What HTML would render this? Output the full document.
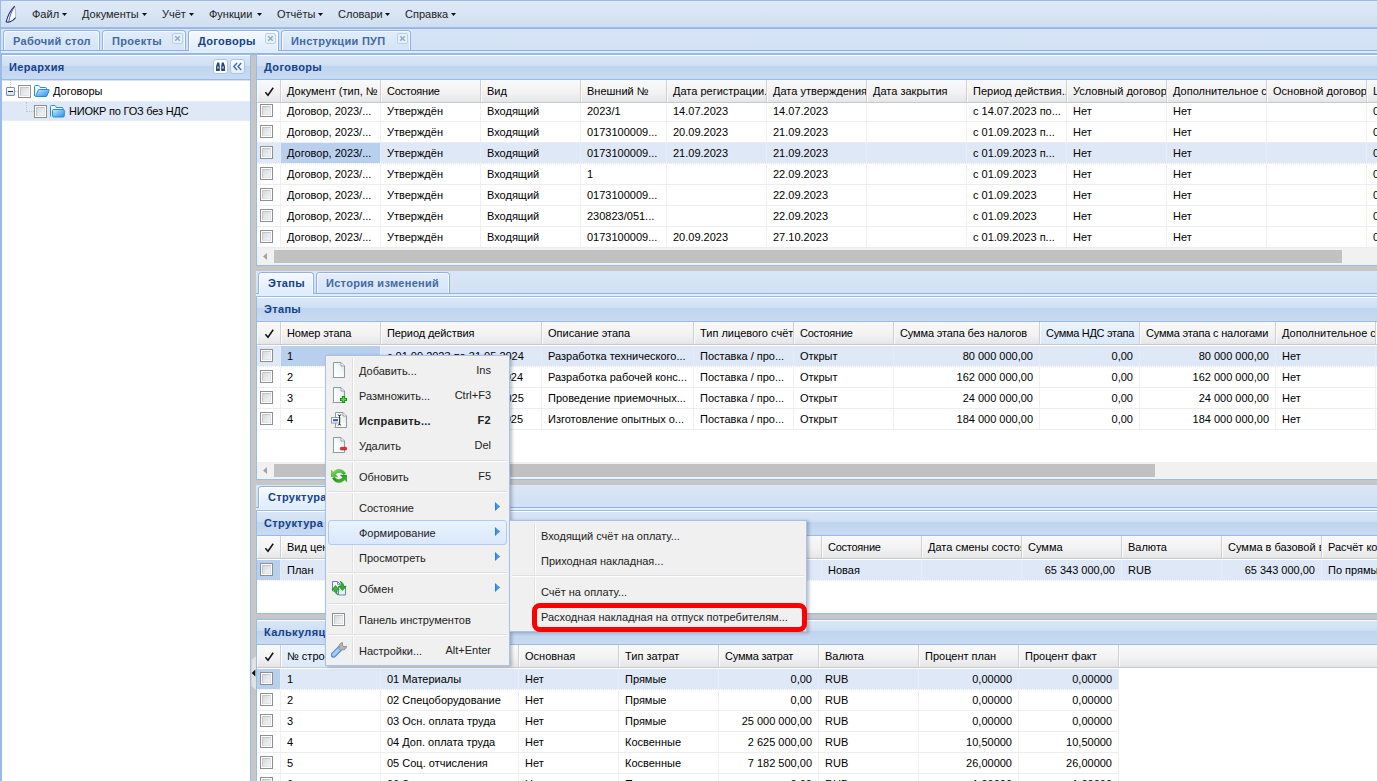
<!DOCTYPE html><html><head><meta charset="utf-8"><title>UI</title><style>
*{box-sizing:border-box;margin:0;padding:0}
html,body{width:1377px;height:781px;overflow:hidden;background:#fff}
body{position:relative;font:11px/13px "Liberation Sans",sans-serif;color:#000}
.a{position:absolute}
.t{position:absolute;white-space:nowrap;line-height:13px;height:13px}
.b{font-weight:bold;letter-spacing:.3px}
.ph{position:absolute;background:linear-gradient(#fff 0,#fff 1px,#d9e6f6 1px,#cfdff3 11px,#bfd4ee 11px,#c9dbf2 100%);border:1px solid #99bbe8;height:26px}
.ph .t{color:#15428b;font-weight:bold;letter-spacing:.35px;left:7px;top:6px}
.gh{position:absolute;height:23px;background:linear-gradient(#f9f9f9 0,#f3f3f4 12px,#e6e7e9 21px,#e2e3e5 22px,#c9c9c9 22px,#c9c9c9 23px);overflow:hidden}
.gh .c{position:absolute;top:0;height:22px;border-right:1px solid #d0d0d0;border-left:1px solid #fbfbfb;overflow:hidden}
.gh .c.ov{background:linear-gradient(#ebf3fd 0,#e3eefc 12px,#d9e8fb 22px)}
.gh .c span{position:absolute;left:5px;top:5px;white-space:nowrap;line-height:13px}
.row{position:absolute;height:21px;background:#fff;border-bottom:1px solid #ededed;overflow:hidden}
.row.sel{background:#dfe8f6;border-bottom:1px dotted #fff}
.row .c{position:absolute;top:0;height:20px;border-right:1px solid #f0f0f0;overflow:hidden}
.row.sel .c{border-right-color:#e6edf8}
.row .c.cs{background:#b8cfee}
.row .c span{position:absolute;left:6px;top:4px;white-space:nowrap;line-height:13px}
.row .c.r span{left:auto;right:6px}
.cb{position:absolute;width:13px;height:13px;border:1px solid #8e8f8f;background:#fff}
.cb i{position:absolute;left:1px;top:1px;width:9px;height:9px;border:1px solid #c3c6cb;border-right-color:#e1e3e6;border-bottom-color:#e1e3e6;background:linear-gradient(135deg,#d6d9df,#f4f4f5)}
.split{position:absolute;background:#c6c6c6}
.tab{position:absolute;height:20px;border:1px solid #8db2e3;border-bottom:none;border-radius:4px 4px 0 0;background:linear-gradient(#e3edf9 0,#d4e3f6 100%);color:#416aa3;font-weight:bold;letter-spacing:.3px}
.tab.act{background:linear-gradient(#f6f9fe 0,#deecfd 100%);color:#15428b;height:21px}
.tab .t{top:4px}
.tab:before{content:"";position:absolute;left:0;right:0;top:0;bottom:0;border:1px solid rgba(255,255,255,.75);border-bottom:none;border-radius:3px 3px 0 0}
.cl{position:absolute;width:11px;height:11px;border:1px solid #b5cdec;border-radius:2px;background:#e9f1fb;opacity:.9}
.sb{position:absolute;height:17px;background:#f1f1f1}
.sb .th{position:absolute;top:2px;height:13px;background:#c1c1c1}
.sb .ar{position:absolute;left:5px;top:4px;width:0;height:0;border:4.5px solid transparent;border-right:5px solid #a3a3a3;border-left:none}
.menu{position:absolute;background:#f0f0f0;border:1px solid #a5c3ea;box-shadow:2px 1px 3px rgba(50,55,75,.32)}
.menu .vl{position:absolute;top:2px;bottom:2px;width:2px;border-left:1px solid #e0e0e0;border-right:1px solid #fff}
.menu .sep{position:absolute;height:2px;border-top:1px solid #e0e0e0;border-bottom:1px solid #fff}
.menu .t{color:#222}
.arw{position:absolute;width:0;height:0;border:4.5px solid transparent;border-left:5px solid #3f7fdc;border-right:none}
.mb .t{color:#222;top:7px}
.dn{position:absolute;width:0;height:0;border:2.5px solid transparent;border-top:3px solid #111;border-bottom:none;top:13px}
</style></head><body>
<div class="a" style="left:0;top:0;width:1377px;height:781px;background:#dfe8f6"></div>
<div class="a mb" style="left:0;top:0;width:1377px;height:28px;border-top:1px solid #99bbe8;border-left:1px solid #99bbe8;background:linear-gradient(#e0eaf6 0,#d8e5f4 50%,#d0deef 100%);border-bottom:1px solid #9cbde9">
<svg class="a" style="left:4px;top:4px" width="13" height="19" viewBox="0 0 13 19"><path d="M9.600 1.200C5.500 5.500 2.600 11 1.200 16.800C3.500 17.700 7.500 16.500 10.600 12.600C10.800 9 10.600 4.500 9.600 1.200Z" fill="#fdfdfe"/><path d="M9.600 1.200C10.600 4.500 10.800 9 10.600 12.600" fill="none" stroke="#a9afc2" stroke-width=".9"/><path d="M9.600 1.200C5.500 5.500 2.600 11 1.200 16.800C3.500 17.700 7.500 16.500 10.600 12.600" fill="none" stroke="#1c2c80" stroke-width="1.100"/><path d="M9.600 1.200C6.600 6 4.600 11 3.800 16.600" fill="none" stroke="#3a4c95" stroke-width=".9"/></svg>
<span class="t" style="left:31px">Файл</span>
<svg class="a" style="left:61px;top:12px" width="5" height="3" viewBox="0 0 5 3"><path d="M0 0h5L2.500 3Z" fill="#111"/></svg>
<span class="t" style="left:81px">Документы</span>
<svg class="a" style="left:141px;top:12px" width="5" height="3" viewBox="0 0 5 3"><path d="M0 0h5L2.500 3Z" fill="#111"/></svg>
<span class="t" style="left:161px">Учёт</span>
<svg class="a" style="left:188px;top:12px" width="5" height="3" viewBox="0 0 5 3"><path d="M0 0h5L2.500 3Z" fill="#111"/></svg>
<span class="t" style="left:208px">Функции</span>
<svg class="a" style="left:256px;top:12px" width="5" height="3" viewBox="0 0 5 3"><path d="M0 0h5L2.500 3Z" fill="#111"/></svg>
<span class="t" style="left:276px">Отчёты</span>
<svg class="a" style="left:317px;top:12px" width="5" height="3" viewBox="0 0 5 3"><path d="M0 0h5L2.500 3Z" fill="#111"/></svg>
<span class="t" style="left:337px">Словари</span>
<svg class="a" style="left:384px;top:12px" width="5" height="3" viewBox="0 0 5 3"><path d="M0 0h5L2.500 3Z" fill="#111"/></svg>
<span class="t" style="left:404px">Справка</span>
<svg class="a" style="left:450px;top:12px" width="5" height="3" viewBox="0 0 5 3"><path d="M0 0h5L2.500 3Z" fill="#111"/></svg>
</div>
<div class="a" style="left:0;top:28px;width:1377px;height:25px;border-left:1px solid #99bbe8;background:linear-gradient(#d7e4f6,#d3e1f5)"></div>
<div class="a" style="left:0;top:28px;width:1377px;height:1px;background:#92b6e6"></div>
<div class="a" style="left:0;top:50px;width:1377px;height:1px;background:#8db2e3"></div>
<div class="a" style="left:0;top:51px;width:1377px;height:2px;background:#deecfd;border-left:1px solid #99bbe8"></div>
<div class="a" style="left:0;top:53px;width:1377px;height:2px;background:#93b7e6"></div>
<div class="tab" style="left:3px;top:30px;width:97px"><span class="t" style="left:9px">Рабочий стол</span>
</div>
<div class="tab" style="left:102px;top:30px;width:84px"><span class="t" style="left:9px">Проекты</span>
<span class="cl" style="right:2px;top:2px"><svg width="9" height="9" viewBox="0 0 9 9" style="position:absolute;left:0;top:0"><path d="M2.2 2.2l4.6 4.6M6.8 2.2L2.2 6.8" stroke="#8aa6cf" stroke-width="1.6"/></svg></span>
</div>
<div class="tab act" style="left:188px;top:30px;width:91px"><span class="t" style="left:9px">Договоры</span>
<span class="cl" style="right:2px;top:2px"><svg width="9" height="9" viewBox="0 0 9 9" style="position:absolute;left:0;top:0"><path d="M2.2 2.2l4.6 4.6M6.8 2.2L2.2 6.8" stroke="#8aa6cf" stroke-width="1.6"/></svg></span>
</div>
<div class="tab" style="left:281px;top:30px;width:130px"><span class="t" style="left:9px">Инструкции ПУП</span>
<span class="cl" style="right:2px;top:2px"><svg width="9" height="9" viewBox="0 0 9 9" style="position:absolute;left:0;top:0"><path d="M2.2 2.2l4.6 4.6M6.8 2.2L2.2 6.8" stroke="#8aa6cf" stroke-width="1.6"/></svg></span>
</div>
<div class="a" style="left:0;top:54px;width:1px;height:727px;background:#99bbe8"></div>
<div class="a" style="left:1px;top:55px;width:250px;height:726px;background:#fff;border-left:1px solid #99bbe8;border-right:1px solid #99bbe8"></div>
<div class="ph" style="left:1px;top:54px;width:250px"><span class="t" style="left:7px">Иерархия</span>
<span class="a" style="left:211px;top:4px;width:15px;height:15px;border:1px solid #a9c5ee;border-radius:3px;background:#fff"><svg width="13" height="13" viewBox="0 0 13 13" style="position:absolute;left:0;top:0"><path d="M2 11V6.5L3.3 2.5H5.2L5.8 6V11Z M7.2 11V6L7.8 2.5H9.7L11 6.5V11Z" fill="#27457f"/><path d="M3 7.5h2M8 7.5h2" stroke="#9fb6dc" stroke-width="2"/></svg></span>
<span class="a" style="left:228px;top:4px;width:15px;height:15px;border:1px solid #a9c5ee;border-radius:3px;background:linear-gradient(#fff,#e3eefb)"><svg width="13" height="13" viewBox="0 0 13 13" style="position:absolute;left:0;top:0"><path d="M6 3L2.8 6.5 6 10M10.2 3L7 6.5l3.2 3.5" fill="none" stroke="#3d6cb3" stroke-width="1.4"/></svg></span>
</div>
<div class="a" style="left:1px;top:80px;width:249px;height:1px;background:#c9c9c9;opacity:.6"></div>
<div class="a" style="left:2px;top:101px;width:248px;height:20px;background:#dfe8f6;border-top:1px dotted #eef2fa;border-bottom:1px dotted #eef2fa"></div>
<div class="a" style="left:10px;top:80px;width:1px;height:7px;border-left:1px dotted #c4c4c4"></div>
<div class="a" style="left:15px;top:91px;width:3px;height:1px;border-top:1px dotted #c4c4c4"></div>
<div class="a" style="left:26px;top:102px;width:1px;height:10px;border-left:1px dotted #c4c4c4"></div>
<div class="a" style="left:26px;top:111px;width:8px;height:1px;border-top:1px dotted #c4c4c4"></div>
<div class="a" style="left:6px;top:87px;width:9px;height:9px;border:1px solid #7f8fa8;border-radius:1px;background:linear-gradient(#fff,#d5dde8)"><i class="a" style="left:1px;top:3px;width:5px;height:1px;background:#1c2f57"></i></div>
<span class="cb" style="left:18px;top:85px"><i></i></span>
<span class="cb" style="left:34px;top:105px"><i></i></span>
<svg class="a" style="left:33px;top:83px" width="18" height="16" viewBox="0 0 18 16"><defs><linearGradient id="fo" x1="0" y1="0" x2="1" y2="1"><stop offset="0" stop-color="#d4eafb"/><stop offset=".45" stop-color="#7fc0f3"/><stop offset="1" stop-color="#2f8de6"/></linearGradient></defs><path d="M1.500 13V3.500q0-1 1-1h3q.8 0 1.200.7l.7 1.300h5.100q1 0 1 1v1.500" fill="#eef7fe" stroke="#1f8fd8"/><path d="M2.500 13.500L5.300 7.200q.3-.7 1-.7h9.200q1 0 .7 1l-2.200 5.300q-.3.700-1 .7Z" fill="url(#fo)" stroke="#1f8fd8"/></svg>
<svg class="a" style="left:49px;top:103px" width="17" height="16" viewBox="0 0 17 16"><path d="M1.500 13.500V3.500q0-1 1-1h3q.8 0 1.200.7l.7 1.300h5.600q1 0 1 1v1" fill="#f0f8fe" stroke="#1f8fd8"/><rect x="3.500" y="6.500" width="11.800" height="7.500" rx="1.200" fill="url(#fo)" stroke="#1f8fd8"/></svg>
<span class="t" style="left:53px;top:85px">Договоры</span>
<span class="t" style="left:69px;top:105px;letter-spacing:-.2px">НИОКР по ГОЗ без НДС</span>
<div class="split" style="left:251px;top:55px;width:5px;height:726px"></div>
<svg class="a" style="left:251px;top:656px" width="5" height="34" viewBox="0 0 5 34"><path d="M5 0L0.500 4V30L5 34Z" fill="#e2e2e2"/><path d="M4.300 13.500v7L0.700 17Z" fill="#111"/></svg>
<div class="a" style="left:256px;top:55px;width:1122px;height:211px;background:#fff;border:1px solid #99bbe8"></div>
<div class="row" style="left:257px;top:101px;width:1120px">
<div class="c" style="left:0;width:24px"><span class="cb" style="left:3px;top:3px"><i></i></span></div>
<div class="c" style="left:24px;width:100px"><span>Договор, 2023/...</span></div>
<div class="c" style="left:124px;width:100px"><span>Утверждён</span></div>
<div class="c" style="left:224px;width:100px"><span>Входящий</span></div>
<div class="c" style="left:324px;width:86px"><span>2023/1</span></div>
<div class="c" style="left:410px;width:100px"><span>14.07.2023</span></div>
<div class="c" style="left:510px;width:100px"><span>14.07.2023</span></div>
<div class="c" style="left:610px;width:100px"><span></span></div>
<div class="c" style="left:710px;width:100px"><span>с 14.07.2023 по...</span></div>
<div class="c" style="left:810px;width:100px"><span>Нет</span></div>
<div class="c" style="left:910px;width:100px"><span>Нет</span></div>
<div class="c" style="left:1010px;width:100px"><span></span></div>
<div class="c" style="left:1110px;width:33px"><span>0</span></div>
</div>
<div class="row" style="left:257px;top:122px;width:1120px">
<div class="c" style="left:0;width:24px"><span class="cb" style="left:3px;top:3px"><i></i></span></div>
<div class="c" style="left:24px;width:100px"><span>Договор, 2023/...</span></div>
<div class="c" style="left:124px;width:100px"><span>Утверждён</span></div>
<div class="c" style="left:224px;width:100px"><span>Входящий</span></div>
<div class="c" style="left:324px;width:86px"><span>0173100009...</span></div>
<div class="c" style="left:410px;width:100px"><span>20.09.2023</span></div>
<div class="c" style="left:510px;width:100px"><span>21.09.2023</span></div>
<div class="c" style="left:610px;width:100px"><span></span></div>
<div class="c" style="left:710px;width:100px"><span>с 01.09.2023 п...</span></div>
<div class="c" style="left:810px;width:100px"><span>Нет</span></div>
<div class="c" style="left:910px;width:100px"><span>Нет</span></div>
<div class="c" style="left:1010px;width:100px"><span></span></div>
<div class="c" style="left:1110px;width:33px"><span>0</span></div>
</div>
<div class="row sel" style="left:257px;top:143px;width:1120px">
<div class="c" style="left:0;width:24px"><span class="cb" style="left:3px;top:3px"><i></i></span></div>
<div class="c cs" style="left:24px;width:100px"><span>Договор, 2023/...</span></div>
<div class="c" style="left:124px;width:100px"><span>Утверждён</span></div>
<div class="c" style="left:224px;width:100px"><span>Входящий</span></div>
<div class="c" style="left:324px;width:86px"><span>0173100009...</span></div>
<div class="c" style="left:410px;width:100px"><span>21.09.2023</span></div>
<div class="c" style="left:510px;width:100px"><span>21.09.2023</span></div>
<div class="c" style="left:610px;width:100px"><span></span></div>
<div class="c" style="left:710px;width:100px"><span>с 01.09.2023 п...</span></div>
<div class="c" style="left:810px;width:100px"><span>Нет</span></div>
<div class="c" style="left:910px;width:100px"><span>Нет</span></div>
<div class="c" style="left:1010px;width:100px"><span></span></div>
<div class="c" style="left:1110px;width:33px"><span>0</span></div>
</div>
<div class="row" style="left:257px;top:164px;width:1120px">
<div class="c" style="left:0;width:24px"><span class="cb" style="left:3px;top:3px"><i></i></span></div>
<div class="c" style="left:24px;width:100px"><span>Договор, 2023/...</span></div>
<div class="c" style="left:124px;width:100px"><span>Утверждён</span></div>
<div class="c" style="left:224px;width:100px"><span>Входящий</span></div>
<div class="c" style="left:324px;width:86px"><span>1</span></div>
<div class="c" style="left:410px;width:100px"><span></span></div>
<div class="c" style="left:510px;width:100px"><span>22.09.2023</span></div>
<div class="c" style="left:610px;width:100px"><span></span></div>
<div class="c" style="left:710px;width:100px"><span>с 01.09.2023</span></div>
<div class="c" style="left:810px;width:100px"><span>Нет</span></div>
<div class="c" style="left:910px;width:100px"><span>Нет</span></div>
<div class="c" style="left:1010px;width:100px"><span></span></div>
<div class="c" style="left:1110px;width:33px"><span>0</span></div>
</div>
<div class="row" style="left:257px;top:185px;width:1120px">
<div class="c" style="left:0;width:24px"><span class="cb" style="left:3px;top:3px"><i></i></span></div>
<div class="c" style="left:24px;width:100px"><span>Договор, 2023/...</span></div>
<div class="c" style="left:124px;width:100px"><span>Утверждён</span></div>
<div class="c" style="left:224px;width:100px"><span>Входящий</span></div>
<div class="c" style="left:324px;width:86px"><span>0173100009...</span></div>
<div class="c" style="left:410px;width:100px"><span></span></div>
<div class="c" style="left:510px;width:100px"><span>22.09.2023</span></div>
<div class="c" style="left:610px;width:100px"><span></span></div>
<div class="c" style="left:710px;width:100px"><span>с 01.09.2023</span></div>
<div class="c" style="left:810px;width:100px"><span>Нет</span></div>
<div class="c" style="left:910px;width:100px"><span>Нет</span></div>
<div class="c" style="left:1010px;width:100px"><span></span></div>
<div class="c" style="left:1110px;width:33px"><span>0</span></div>
</div>
<div class="row" style="left:257px;top:206px;width:1120px">
<div class="c" style="left:0;width:24px"><span class="cb" style="left:3px;top:3px"><i></i></span></div>
<div class="c" style="left:24px;width:100px"><span>Договор, 2023/...</span></div>
<div class="c" style="left:124px;width:100px"><span>Утверждён</span></div>
<div class="c" style="left:224px;width:100px"><span>Входящий</span></div>
<div class="c" style="left:324px;width:86px"><span>230823/051...</span></div>
<div class="c" style="left:410px;width:100px"><span></span></div>
<div class="c" style="left:510px;width:100px"><span>22.09.2023</span></div>
<div class="c" style="left:610px;width:100px"><span></span></div>
<div class="c" style="left:710px;width:100px"><span>с 01.09.2023</span></div>
<div class="c" style="left:810px;width:100px"><span>Нет</span></div>
<div class="c" style="left:910px;width:100px"><span>Нет</span></div>
<div class="c" style="left:1010px;width:100px"><span></span></div>
<div class="c" style="left:1110px;width:33px"><span>0</span></div>
</div>
<div class="row" style="left:257px;top:227px;width:1120px">
<div class="c" style="left:0;width:24px"><span class="cb" style="left:3px;top:3px"><i></i></span></div>
<div class="c" style="left:24px;width:100px"><span>Договор, 2023/...</span></div>
<div class="c" style="left:124px;width:100px"><span>Утверждён</span></div>
<div class="c" style="left:224px;width:100px"><span>Входящий</span></div>
<div class="c" style="left:324px;width:86px"><span>0173100009...</span></div>
<div class="c" style="left:410px;width:100px"><span>20.09.2023</span></div>
<div class="c" style="left:510px;width:100px"><span>27.10.2023</span></div>
<div class="c" style="left:610px;width:100px"><span></span></div>
<div class="c" style="left:710px;width:100px"><span>с 01.09.2023 п...</span></div>
<div class="c" style="left:810px;width:100px"><span>Нет</span></div>
<div class="c" style="left:910px;width:100px"><span>Нет</span></div>
<div class="c" style="left:1010px;width:100px"><span></span></div>
<div class="c" style="left:1110px;width:33px"><span>0</span></div>
</div>
<div class="gh" style="left:257px;top:80px;width:1120px">
<div class="c" style="left:0px;width:24px"><svg style="position:absolute;left:6px;top:6px" width="11" height="11" viewBox="0 0 11 11"><path d="M1.400 6.300L4 9.200 9.200 1.800" fill="none" stroke="#111" stroke-width="1.500"/></svg></div>
<div class="c" style="left:24px;width:100px"><span>Документ (тип, №</span></div>
<div class="c" style="left:124px;width:100px"><span style="letter-spacing:-0.25px">Состояние</span></div>
<div class="c" style="left:224px;width:100px"><span>Вид</span></div>
<div class="c" style="left:324px;width:86px"><span>Внешний №</span></div>
<div class="c" style="left:410px;width:100px"><span>Дата регистрации...</span></div>
<div class="c" style="left:510px;width:100px"><span>Дата утверждения</span></div>
<div class="c" style="left:610px;width:100px"><span>Дата закрытия</span></div>
<div class="c" style="left:710px;width:100px"><span>Период действия...</span></div>
<div class="c" style="left:810px;width:100px"><span>Условный договор</span></div>
<div class="c" style="left:910px;width:100px"><span>Дополнительное с</span></div>
<div class="c" style="left:1010px;width:100px"><span>Основной договор</span></div>
<div class="c" style="left:1110px;width:33px"><span>Ц</span></div>
</div>
<div class="ph" style="left:256px;top:54px;width:1122px"><span class="t" style="left:7px">Договоры</span></div>
<div class="sb" style="left:257px;top:248px;width:1120px"><svg class="a" style="left:6px;top:5px" width="4" height="7" viewBox="0 0 4 7"><path d="M4 0v7L0 3.500Z" fill="#a3a3a3"/></svg><i class="th" style="left:17px;width:1068px"></i></div>
<div class="split" style="left:256px;top:266px;width:1121px;height:5px"></div>
<div class="a" style="left:256px;top:271px;width:1122px;height:22px;background:linear-gradient(#d9e6f7,#d1e0f4)"></div>
<div class="a" style="left:256px;top:293px;width:1121px;height:1px;background:#8db2e3"></div>
<div class="a" style="left:256px;top:294px;width:1121px;height:2px;background:#e4eefb"></div>
<div class="tab act" style="left:258px;top:272px;width:56px;height:22px"><span class="t" style="left:9px;top:4px">Этапы</span></div>
<div class="tab" style="left:316px;top:272px;width:134px;height:21px"><span class="t" style="left:9px;top:4px">История изменений</span></div>
<div class="a" style="left:256px;top:296px;width:1122px;height:184px;background:#fff;border:1px solid #99bbe8"></div>
<div class="row sel" style="left:257px;top:346px;width:1120px">
<div class="c" style="left:0;width:24px"><span class="cb" style="left:3px;top:3px"><i></i></span></div>
<div class="c cs" style="left:24px;width:100px"><span>1</span></div>
<div class="c" style="left:124px;width:161px"><span>с 01.09.2023 по 31.05.2024</span></div>
<div class="c" style="left:285px;width:152px"><span>Разработка технического...</span></div>
<div class="c" style="left:437px;width:100px"><span>Поставка / про...</span></div>
<div class="c" style="left:537px;width:100px"><span>Открыт</span></div>
<div class="c r" style="left:637px;width:146px"><span>80 000 000,00</span></div>
<div class="c r" style="left:783px;width:100px"><span>0,00</span></div>
<div class="c r" style="left:883px;width:136px"><span>80 000 000,00</span></div>
<div class="c" style="left:1019px;width:100px"><span>Нет</span></div>
<div class="c" style="left:1119px;width:24px"><span></span></div>
</div>
<div class="row" style="left:257px;top:367px;width:1120px">
<div class="c" style="left:0;width:24px"><span class="cb" style="left:3px;top:3px"><i></i></span></div>
<div class="c" style="left:24px;width:100px"><span>2</span></div>
<div class="c" style="left:124px;width:161px"><span>с 01.06.2024 по 30.11.2024</span></div>
<div class="c" style="left:285px;width:152px"><span>Разработка рабочей конс...</span></div>
<div class="c" style="left:437px;width:100px"><span>Поставка / про...</span></div>
<div class="c" style="left:537px;width:100px"><span>Открыт</span></div>
<div class="c r" style="left:637px;width:146px"><span>162 000 000,00</span></div>
<div class="c r" style="left:783px;width:100px"><span>0,00</span></div>
<div class="c r" style="left:883px;width:136px"><span>162 000 000,00</span></div>
<div class="c" style="left:1019px;width:100px"><span>Нет</span></div>
<div class="c" style="left:1119px;width:24px"><span></span></div>
</div>
<div class="row" style="left:257px;top:388px;width:1120px">
<div class="c" style="left:0;width:24px"><span class="cb" style="left:3px;top:3px"><i></i></span></div>
<div class="c" style="left:24px;width:100px"><span>3</span></div>
<div class="c" style="left:124px;width:161px"><span>с 01.12.2024 по 31.03.2025</span></div>
<div class="c" style="left:285px;width:152px"><span>Проведение приемочных...</span></div>
<div class="c" style="left:437px;width:100px"><span>Поставка / про...</span></div>
<div class="c" style="left:537px;width:100px"><span>Открыт</span></div>
<div class="c r" style="left:637px;width:146px"><span>24 000 000,00</span></div>
<div class="c r" style="left:783px;width:100px"><span>0,00</span></div>
<div class="c r" style="left:883px;width:136px"><span>24 000 000,00</span></div>
<div class="c" style="left:1019px;width:100px"><span>Нет</span></div>
<div class="c" style="left:1119px;width:24px"><span></span></div>
</div>
<div class="row" style="left:257px;top:409px;width:1120px">
<div class="c" style="left:0;width:24px"><span class="cb" style="left:3px;top:3px"><i></i></span></div>
<div class="c" style="left:24px;width:100px"><span>4</span></div>
<div class="c" style="left:124px;width:161px"><span>с 01.04.2025 по 30.11.2025</span></div>
<div class="c" style="left:285px;width:152px"><span>Изготовление опытных о...</span></div>
<div class="c" style="left:437px;width:100px"><span>Поставка / про...</span></div>
<div class="c" style="left:537px;width:100px"><span>Открыт</span></div>
<div class="c r" style="left:637px;width:146px"><span>184 000 000,00</span></div>
<div class="c r" style="left:783px;width:100px"><span>0,00</span></div>
<div class="c r" style="left:883px;width:136px"><span>184 000 000,00</span></div>
<div class="c" style="left:1019px;width:100px"><span>Нет</span></div>
<div class="c" style="left:1119px;width:24px"><span></span></div>
</div>
<div class="gh" style="left:257px;top:322px;width:1120px">
<div class="c" style="left:0px;width:24px"><svg style="position:absolute;left:6px;top:6px" width="11" height="11" viewBox="0 0 11 11"><path d="M1.400 6.300L4 9.200 9.200 1.800" fill="none" stroke="#111" stroke-width="1.500"/></svg></div>
<div class="c" style="left:24px;width:100px"><span style="letter-spacing:-0.1px">Номер этапа</span></div>
<div class="c" style="left:124px;width:161px"><span style="letter-spacing:-0.1px">Период действия</span></div>
<div class="c" style="left:285px;width:152px"><span>Описание этапа</span></div>
<div class="c" style="left:437px;width:100px"><span>Тип лицевого счёт</span></div>
<div class="c" style="left:537px;width:100px"><span style="letter-spacing:-0.25px">Состояние</span></div>
<div class="c" style="left:637px;width:146px"><span style="letter-spacing:-0.13px">Сумма этапа без налогов</span></div>
<div class="c ov" style="left:783px;width:100px"><span style="letter-spacing:-0.3px">Сумма НДС этапа</span></div>
<div class="c" style="left:883px;width:136px"><span style="letter-spacing:-0.18px">Сумма этапа с налогами</span></div>
<div class="c" style="left:1019px;width:100px"><span>Дополнительное с</span></div>
<div class="c" style="left:1119px;width:24px"><span></span></div>
</div>
<div class="ph" style="left:256px;top:296px;width:1122px"><span class="t" style="left:7px">Этапы</span></div>
<div class="sb" style="left:257px;top:462px;width:1120px"><svg class="a" style="left:6px;top:5px" width="4" height="7" viewBox="0 0 4 7"><path d="M4 0v7L0 3.500Z" fill="#a3a3a3"/></svg><i class="th" style="left:17px;width:881px"></i></div>
<div class="split" style="left:256px;top:480px;width:1121px;height:5px"></div>
<div class="a" style="left:256px;top:485px;width:1122px;height:22px;background:linear-gradient(#d9e6f7,#d1e0f4)"></div>
<div class="a" style="left:256px;top:507px;width:1121px;height:1px;background:#8db2e3"></div>
<div class="a" style="left:256px;top:508px;width:1121px;height:2px;background:#e4eefb"></div>
<div class="tab act" style="left:258px;top:486px;width:92px;height:22px"><span class="t" style="left:9px;top:4px">Структура цен</span></div>
<div class="a" style="left:256px;top:510px;width:1122px;height:104px;background:#fff;border:1px solid #99bbe8"></div>
<div class="row sel" style="left:257px;top:560px;width:1120px">
<div class="c cs" style="left:0;width:24px"><span class="cb" style="left:3px;top:3px"><i></i></span></div>
<div class="c" style="left:24px;width:140px"><span>План</span></div>
<div class="c" style="left:164px;width:100px"><span></span></div>
<div class="c" style="left:264px;width:100px"><span></span></div>
<div class="c" style="left:364px;width:100px"><span></span></div>
<div class="c" style="left:464px;width:101px"><span></span></div>
<div class="c" style="left:565px;width:100px"><span>Новая</span></div>
<div class="c" style="left:665px;width:100px"><span></span></div>
<div class="c r" style="left:765px;width:100px"><span>65 343 000,00</span></div>
<div class="c" style="left:865px;width:100px"><span>RUB</span></div>
<div class="c r" style="left:965px;width:100px"><span>65 343 000,00</span></div>
<div class="c" style="left:1065px;width:78px"><span>По прямы</span></div>
</div>
<div class="gh" style="left:257px;top:536px;width:1120px">
<div class="c" style="left:0px;width:24px"><svg style="position:absolute;left:6px;top:6px" width="11" height="11" viewBox="0 0 11 11"><path d="M1.400 6.300L4 9.200 9.200 1.800" fill="none" stroke="#111" stroke-width="1.500"/></svg></div>
<div class="c" style="left:24px;width:140px"><span>Вид цены</span></div>
<div class="c" style="left:164px;width:100px"><span>Тип</span></div>
<div class="c" style="left:264px;width:100px"><span>Номер</span></div>
<div class="c" style="left:364px;width:100px"><span>Дата</span></div>
<div class="c" style="left:464px;width:101px"><span>Основание</span></div>
<div class="c" style="left:565px;width:100px"><span style="letter-spacing:-0.25px">Состояние</span></div>
<div class="c" style="left:665px;width:100px"><span>Дата смены состоя</span></div>
<div class="c" style="left:765px;width:100px"><span>Сумма</span></div>
<div class="c" style="left:865px;width:100px"><span>Валюта</span></div>
<div class="c" style="left:965px;width:100px"><span>Сумма в базовой в</span></div>
<div class="c" style="left:1065px;width:78px"><span>Расчёт ко</span></div>
</div>
<div class="ph" style="left:256px;top:510px;width:1122px"><span class="t" style="left:7px">Структура цен</span></div>
<div class="split" style="left:256px;top:614px;width:1121px;height:5px"></div>
<div class="a" style="left:256px;top:619px;width:1122px;height:170px;background:#fff;border:1px solid #99bbe8"></div>
<div class="row sel" style="left:257px;top:669px;width:862px">
<div class="c cs" style="left:0;width:24px"><span class="cb" style="left:3px;top:3px"><i></i></span></div>
<div class="c" style="left:24px;width:100px"><span>1</span></div>
<div class="c" style="left:124px;width:138px"><span>01 Материалы</span></div>
<div class="c" style="left:262px;width:100px"><span>Нет</span></div>
<div class="c" style="left:362px;width:100px"><span>Прямые</span></div>
<div class="c r" style="left:462px;width:100px"><span>0,00</span></div>
<div class="c" style="left:562px;width:100px"><span>RUB</span></div>
<div class="c r" style="left:662px;width:100px"><span>0,00000</span></div>
<div class="c r" style="left:762px;width:100px"><span>0,00000</span></div>
</div>
<div class="row" style="left:257px;top:690px;width:862px">
<div class="c" style="left:0;width:24px"><span class="cb" style="left:3px;top:3px"><i></i></span></div>
<div class="c" style="left:24px;width:100px"><span>2</span></div>
<div class="c" style="left:124px;width:138px"><span>02 Спецоборудование</span></div>
<div class="c" style="left:262px;width:100px"><span>Нет</span></div>
<div class="c" style="left:362px;width:100px"><span>Прямые</span></div>
<div class="c r" style="left:462px;width:100px"><span>0,00</span></div>
<div class="c" style="left:562px;width:100px"><span>RUB</span></div>
<div class="c r" style="left:662px;width:100px"><span>0,00000</span></div>
<div class="c r" style="left:762px;width:100px"><span>0,00000</span></div>
</div>
<div class="row" style="left:257px;top:711px;width:862px">
<div class="c" style="left:0;width:24px"><span class="cb" style="left:3px;top:3px"><i></i></span></div>
<div class="c" style="left:24px;width:100px"><span>3</span></div>
<div class="c" style="left:124px;width:138px"><span>03 Осн. оплата труда</span></div>
<div class="c" style="left:262px;width:100px"><span>Нет</span></div>
<div class="c" style="left:362px;width:100px"><span>Прямые</span></div>
<div class="c r" style="left:462px;width:100px"><span>25 000 000,00</span></div>
<div class="c" style="left:562px;width:100px"><span>RUB</span></div>
<div class="c r" style="left:662px;width:100px"><span>0,00000</span></div>
<div class="c r" style="left:762px;width:100px"><span>0,00000</span></div>
</div>
<div class="row" style="left:257px;top:732px;width:862px">
<div class="c" style="left:0;width:24px"><span class="cb" style="left:3px;top:3px"><i></i></span></div>
<div class="c" style="left:24px;width:100px"><span>4</span></div>
<div class="c" style="left:124px;width:138px"><span>04 Доп. оплата труда</span></div>
<div class="c" style="left:262px;width:100px"><span>Нет</span></div>
<div class="c" style="left:362px;width:100px"><span>Косвенные</span></div>
<div class="c r" style="left:462px;width:100px"><span>2 625 000,00</span></div>
<div class="c" style="left:562px;width:100px"><span>RUB</span></div>
<div class="c r" style="left:662px;width:100px"><span>10,50000</span></div>
<div class="c r" style="left:762px;width:100px"><span>10,50000</span></div>
</div>
<div class="row" style="left:257px;top:753px;width:862px">
<div class="c" style="left:0;width:24px"><span class="cb" style="left:3px;top:3px"><i></i></span></div>
<div class="c" style="left:24px;width:100px"><span>5</span></div>
<div class="c" style="left:124px;width:138px"><span>05 Соц. отчисления</span></div>
<div class="c" style="left:262px;width:100px"><span>Нет</span></div>
<div class="c" style="left:362px;width:100px"><span>Косвенные</span></div>
<div class="c r" style="left:462px;width:100px"><span>7 182 500,00</span></div>
<div class="c" style="left:562px;width:100px"><span>RUB</span></div>
<div class="c r" style="left:662px;width:100px"><span>26,00000</span></div>
<div class="c r" style="left:762px;width:100px"><span>26,00000</span></div>
</div>
<div class="row" style="left:257px;top:774px;width:862px">
<div class="c" style="left:0;width:24px"><span class="cb" style="left:3px;top:3px"><i></i></span></div>
<div class="c" style="left:24px;width:100px"><span>6</span></div>
<div class="c" style="left:124px;width:138px"><span>06 Затраты на командировки</span></div>
<div class="c" style="left:262px;width:100px"><span>Нет</span></div>
<div class="c" style="left:362px;width:100px"><span>Прямые</span></div>
<div class="c r" style="left:462px;width:100px"><span>0,00</span></div>
<div class="c" style="left:562px;width:100px"><span>RUB</span></div>
<div class="c r" style="left:662px;width:100px"><span>1,00000</span></div>
<div class="c r" style="left:762px;width:100px"><span>1,00000</span></div>
</div>
<div class="gh" style="left:257px;top:645px;width:1120px">
<div class="c" style="left:0px;width:24px"><svg style="position:absolute;left:6px;top:6px" width="11" height="11" viewBox="0 0 11 11"><path d="M1.400 6.300L4 9.200 9.200 1.800" fill="none" stroke="#111" stroke-width="1.500"/></svg></div>
<div class="c ov" style="left:24px;width:100px"><span>№ стро</span></div>
<div class="c" style="left:124px;width:138px"><span>Статья затрат</span></div>
<div class="c" style="left:262px;width:100px"><span>Основная</span></div>
<div class="c" style="left:362px;width:100px"><span>Тип затрат</span></div>
<div class="c" style="left:462px;width:100px"><span style="letter-spacing:-0.2px">Сумма затрат</span></div>
<div class="c" style="left:562px;width:100px"><span>Валюта</span></div>
<div class="c" style="left:662px;width:100px"><span>Процент план</span></div>
<div class="c" style="left:762px;width:100px"><span>Процент факт</span></div>
<div class="c" style="left:862px;width:281px"><span></span></div>
</div>
<div class="ph" style="left:256px;top:619px;width:1122px"><span class="t" style="left:7px">Калькуляция</span></div>
<div class="menu" style="left:325px;top:355px;width:185px;height:311px">
<i class="vl" style="left:26px"></i>
<svg width="0" height="0" style="position:absolute"><defs><linearGradient id="pg" x1="1" y1="0" x2="0.2" y2="0.8"><stop offset="0" stop-color="#cfe3e1"/><stop offset=".55" stop-color="#f3f8f8"/><stop offset="1" stop-color="#ffffff"/></linearGradient><linearGradient id="ab" x1="0" y1="0" x2="1" y2="0"><stop offset="0" stop-color="#1d78e8"/><stop offset=".5" stop-color="#4f9bf0"/><stop offset="1" stop-color="#1d6fe0"/></linearGradient><linearGradient id="gr" x1="0" y1="0" x2="1" y2="1"><stop offset="0" stop-color="#8ee868"/><stop offset="1" stop-color="#1f9a12"/></linearGradient><linearGradient id="gr2" x1="0" y1="0" x2="1" y2="1"><stop offset="0" stop-color="#55c93a"/><stop offset="1" stop-color="#0f7a08"/></linearGradient></defs></svg>
<span class="a" style="left:5px;top:6px;width:16px;height:16px"><svg width="16" height="16" viewBox="0 0 16 16"><g transform="translate(0,0)"><path d="M1 15.6h13" stroke="#b4bcbc" stroke-width=".9"/><path d="M2.500 .5h7.500l3.500 3.500v11.500h-11Z" fill="url(#pg)" stroke="#8b9c9c"/><path d="M10 .8v3.200h3.200" fill="#fff" stroke="#8b9c9c" stroke-width=".9"/></g></svg></span>
<span class="t" style="left:33px;top:9px">Добавить...</span>
<span class="t" style="right:18px;top:8px">Ins</span>
<span class="a" style="left:5px;top:31px;width:16px;height:16px"><svg width="16" height="16" viewBox="0 0 16 16"><g transform="translate(0,0)"><path d="M1 15.6h13" stroke="#b4bcbc" stroke-width=".9"/><path d="M2.500 .5h7.500l3.500 3.500v11.500h-11Z" fill="url(#pg)" stroke="#8b9c9c"/><path d="M10 .8v3.200h3.200" fill="#fff" stroke="#8b9c9c" stroke-width=".9"/></g><path d="M12.500 9v7M9 12.500h7" stroke="#138a13" stroke-width="3.200"/><path d="M12.500 10v5M10 12.500h5" stroke="#4fdc3c" stroke-width="1.500"/></svg></span>
<span class="t" style="left:33px;top:34px">Размножить...</span>
<span class="t" style="right:18px;top:33px">Ctrl+F3</span>
<span class="a" style="left:5px;top:56px;width:16px;height:16px"><svg width="16" height="16" viewBox="0 0 16 16"><g transform="translate(2.0,0)"><path d="M1 15.6h13" stroke="#b4bcbc" stroke-width=".9"/><path d="M2.500 .5h7.500l3.500 3.500v11.500h-11Z" fill="url(#pg)" stroke="#8b9c9c"/><path d="M10 .8v3.200h3.200" fill="#fff" stroke="#8b9c9c" stroke-width=".9"/></g><rect x=".5" y="5.500" width="8.500" height="5.500" fill="#fbfbfb" stroke="#9a9a9a"/><rect x="2" y="7.200" width="5" height="2" fill="#2a50d8"/><path d="M8.500 3v10M6.800 2.800Q8.500 3.300 8.500 4Q8.500 3.300 10.200 2.800M6.800 13.200Q8.500 12.700 8.500 12Q8.500 12.700 10.200 13.200" stroke="#333" stroke-width=".9" fill="none"/></svg></span>
<span class="t b" style="left:33px;top:59px">Исправить...</span>
<span class="t b" style="right:18px;top:58px">F2</span>
<span class="a" style="left:5px;top:81px;width:16px;height:16px"><svg width="16" height="16" viewBox="0 0 16 16"><g transform="translate(0,0)"><path d="M1 15.6h13" stroke="#b4bcbc" stroke-width=".9"/><path d="M2.500 .5h7.500l3.500 3.500v11.500h-11Z" fill="url(#pg)" stroke="#8b9c9c"/><path d="M10 .8v3.200h3.200" fill="#fff" stroke="#8b9c9c" stroke-width=".9"/></g><rect x="9.300" y="10.300" width="6.400" height="2.600" rx="1" fill="#e0353c" stroke="#b0181f" stroke-width=".7"/></svg></span>
<span class="t" style="left:33px;top:84px">Удалить</span>
<span class="t" style="right:18px;top:83px">Del</span>
<i class="sep" style="left:2px;right:2px;top:104px"></i>
<span class="a" style="left:5px;top:112px;width:16px;height:16px"><svg width="16" height="16" viewBox="0 0 16 16"><path d="M0 1.900V8.800H6.700L4.400 6.500A4.700 4.700 0 0 1 12.300 6.700L14.600 5.600A7.200 7.200 0 0 0 2.300 4.200Z" fill="url(#gr)" stroke="#3aa82a" stroke-width=".4"/><path d="M0 1.900V8.800H6.700L4.400 6.500A4.700 4.700 0 0 1 12.300 6.700L14.600 5.600A7.200 7.200 0 0 0 2.300 4.200Z" transform="rotate(180 8 7.950)" fill="url(#gr2)" stroke="#2a9a1c" stroke-width=".4"/></svg></span>
<span class="t" style="left:33px;top:115px">Обновить</span>
<span class="t" style="right:18px;top:114px">F5</span>
<i class="sep" style="left:2px;right:2px;top:135px"></i>
<span class="t" style="left:33px;top:146px">Состояние</span>
<svg class="a" style="left:169px;top:146px" width="5" height="9" viewBox="0 0 5 9"><path d="M0 0L5 4.500L0 9Z" fill="url(#ab)"/></svg>
<div class="a" style="left:2px;top:164px;width:179px;height:25px;border:1px solid #aaccf6;border-radius:3px;background:linear-gradient(#ebf3fd,#d9e8fb)"></div>
<span class="t" style="left:33px;top:171px">Формирование</span>
<svg class="a" style="left:169px;top:171px" width="5" height="9" viewBox="0 0 5 9"><path d="M0 0L5 4.500L0 9Z" fill="url(#ab)"/></svg>
<span class="t" style="left:33px;top:196px">Просмотреть</span>
<svg class="a" style="left:169px;top:196px" width="5" height="9" viewBox="0 0 5 9"><path d="M0 0L5 4.500L0 9Z" fill="url(#ab)"/></svg>
<i class="sep" style="left:2px;right:2px;top:216px"></i>
<span class="a" style="left:5px;top:224px;width:16px;height:16px"><svg width="16" height="16" viewBox="0 0 16 16"><path d="M1.500 1.500h5l2.500 2.500v7h-7.500Z" fill="#f6f9fd" stroke="#6883b5"/><path d="M6.500 1.800v2.500h2.500" fill="none" stroke="#6883b5" stroke-width=".9"/><path d="M7.500 6.500h7v8.500h-7Z" fill="#e6f0fb" stroke="#6883b5"/><path d="M4.500 5.600L1 9.600h2.200c.2 2.500 1.400 4 3.600 5.200c-1-1.600-1.200-3.200-1-5.200h2.200Z" fill="#35c224" stroke="#128a0e" stroke-width=".7"/><path d="M11.500 10.400L15 6.400h-2.200c-.2-2.500-1.400-4-3.600-5.200c1 1.600 1.200 3.200 1 5.200H8Z" fill="#2ab81c" stroke="#0f7f0c" stroke-width=".7"/></svg></span>
<span class="t" style="left:33px;top:227px">Обмен</span>
<svg class="a" style="left:169px;top:227px" width="5" height="9" viewBox="0 0 5 9"><path d="M0 0L5 4.500L0 9Z" fill="url(#ab)"/></svg>
<i class="sep" style="left:2px;right:2px;top:247px"></i>
<span class="cb" style="left:6px;top:257px"><i></i></span>
<span class="t" style="left:33px;top:258px">Панель инструментов</span>
<i class="sep" style="left:2px;right:2px;top:278px"></i>
<span class="a" style="left:5px;top:286px;width:16px;height:16px"><svg width="16" height="16" viewBox="0 0 16 16"><path d="M9.200 6.200L2.500 12.900" stroke="#4f8fe6" stroke-width="5.600" stroke-linecap="round"/><path d="M9 6.400L2.700 12.700" stroke="#a9cbf5" stroke-width="3.200" stroke-linecap="round"/><path d="M8.300 5.600C7.400 3.200 9.200 .8 11.600 .7L11.300 3.300L13 4.800L15.500 4.300C15.500 6.700 13.200 8.500 10.700 7.800L9.800 8.700L7.500 6.400Z" fill="#b5b5b5" stroke="#808080" stroke-width=".8"/></svg></span>
<span class="t" style="left:33px;top:289px">Настройки...</span>
<span class="t" style="right:18px;top:288px">Alt+Enter</span>
</div>
<div class="menu" style="left:509px;top:520px;width:298px;height:112px">
<i class="vl" style="left:24px"></i>
<span class="t" style="left:31px;top:9px">Входящий счёт на оплату...</span>
<span class="t" style="left:31px;top:34px">Приходная накладная...</span>
<i class="sep" style="left:2px;right:2px;top:54px"></i>
<span class="t" style="left:31px;top:65px">Счёт на оплату...</span>
<span class="t" style="left:31px;top:90px">Расходная накладная на отпуск потребителям...</span>
</div>
<div class="a" style="left:532.300px;top:603.300px;width:274.300px;height:29.200px;border:5px solid #ff0000;border-radius:8px"></div>
</body></html>
